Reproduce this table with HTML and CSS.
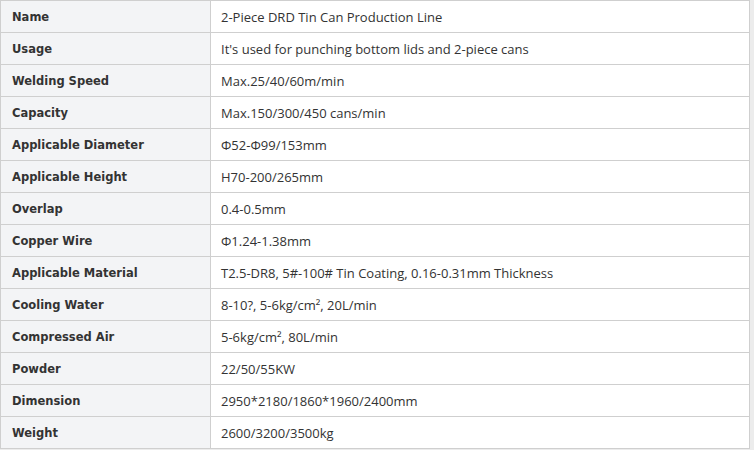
FILE: index.html
```
<!DOCTYPE html>
<html>
<head>
<meta charset="utf-8">
<link rel="stylesheet" href="styles.css">
</head>
<body>
<div class="wrap">
<table class="spec">
<tbody>
<tr><th>Name</th><td>2-Piece DRD Tin Can Production Line</td></tr>
<tr><th>Usage</th><td>It's used for punching bottom lids and 2-piece cans</td></tr>
<tr><th>Welding Speed</th><td>Max.25/40/60m/min</td></tr>
<tr><th>Capacity</th><td>Max.150/300/450 cans/min</td></tr>
<tr><th>Applicable Diameter</th><td>Φ52-Φ99/153mm</td></tr>
<tr><th>Applicable Height</th><td>H70-200/265mm</td></tr>
<tr><th>Overlap</th><td>0.4-0.5mm</td></tr>
<tr><th>Copper Wire</th><td>Φ1.24-1.38mm</td></tr>
<tr><th>Applicable Material</th><td>T2.5-DR8, 5#-100# Tin Coating, 0.16-0.31mm Thickness</td></tr>
<tr><th>Cooling Water</th><td>8-10?, 5-6kg/cm², 20L/min</td></tr>
<tr><th>Compressed Air</th><td>5-6kg/cm², 80L/min</td></tr>
<tr><th>Powder</th><td>22/50/55KW</td></tr>
<tr><th>Dimension</th><td>2950*2180/1860*1960/2400mm</td></tr>
<tr><th>Weight</th><td>2600/3200/3500kg</td></tr>
</tbody>
</table>
</div>
</body>
</html>
```
FILE: styles.css
```
html, body {
  margin: 0;
  padding: 0;
  background: #ececec;
}
.wrap {
  width: 750px;
  height: 449px;
  background: #fff;
}
.spec {
  border-collapse: collapse;
  width: 750px;
  table-layout: fixed;
  color: #333;
}
.spec tr {
  height: 32px;
}
.spec th, .spec td {
  border: 1px solid #cfcfcf;
  text-align: left;
  vertical-align: middle;
  white-space: nowrap;
}
.spec th {
  width: 198px;
  padding: 0 0 0 11px;
  background: #f3f4f6;
  font-family: "DejaVu Sans", sans-serif;
  font-weight: bold;
  font-size: 11.5px;
}
.spec td {
  padding: 0 0 0 10px;
  background: #fff;
  font-family: "Open Sans", sans-serif;
  font-size: 13px;
}
```
